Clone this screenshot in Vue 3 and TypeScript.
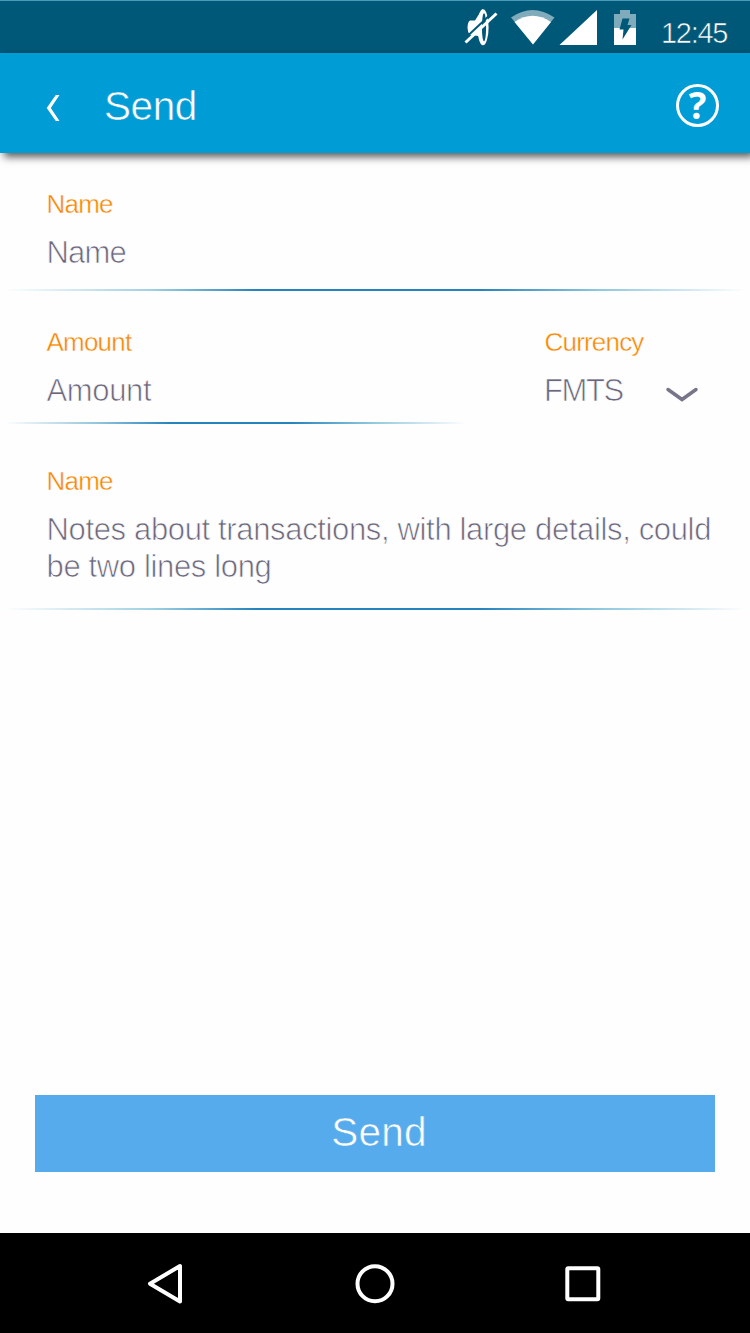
<script setup lang="ts">
import { ref } from 'vue'

const title = ref('Send')
const time = ref('12:45')
const currency = ref('FMTS')
const notes = ref('Notes about transactions, with large details, could be two lines long')
</script>

<template>
  <div class="screen">
    <div class="status">
      <svg class="status-icons" width="180" height="52" viewBox="457 0 180 52">
        <path d="M470 20.500 H475 L481 11 L483 9 V45 Q480.500 43 478.500 36 L470 35 Q467.500 32 467.500 28 Q467.500 22 470 20.500Z" fill="#fff" />
        <ellipse cx="483" cy="27.300" rx="5.600" ry="18" fill="#fff" />
        <ellipse cx="484" cy="27.300" rx="2.100" ry="14" fill="#005878" />
        <path d="M463.500 39.700 L494.500 10.700" stroke="#005878" stroke-width="2" />
        <path d="M465.500 42.500 L496.500 13.500" stroke="#fff" stroke-width="3" />
        <path d="M511 17.500 Q532.500 2.500 554.500 17.500 L533 44Z" fill="#80abbb" />
        <path d="M514.500 22 Q532.500 9.500 551 22 L533 44.500Z" fill="#fff" />
        <path d="M597 10 V45 H559.500Z" fill="#fff" />
        <path d="M620 10 H630 V14 H636 V28 H614 V14 H620Z" fill="#80abbb" />
        <path d="M614 28 H636 V45 H614Z" fill="#fff" />
        <path d="M622.500 18.500 H629.500 L627.500 25 H631.500 L622.500 39.500 L623.500 29.500 H619.500Z" fill="#005878" />
      </svg>
      <span class="time">{{ time }}</span>
    </div>

    <header class="header">
      <svg class="back" width="16" height="28" viewBox="0 0 16 28">
        <path d="M10.800 1 H14.500 L5.800 14 L14.500 27 H10.800 L1.700 14Z" fill="#fff" />
      </svg>
      <h1 class="title">{{ title }}</h1>
      <span class="help">?</span>
    </header>

    <main class="form">
      <section class="field name-field">
        <label class="label">Name</label>
        <div class="value tight">Name</div>
        <div class="rule"></div>
      </section>

      <section class="row">
        <div class="field amount-field">
          <label class="label">Amount</label>
          <div class="value">Amount</div>
          <div class="rule short"></div>
        </div>
        <div class="currency-field">
          <label class="label">Currency</label>
          <div class="select">
            <span class="value code">{{ currency }}</span>
            <svg class="chevron" width="34" height="18" viewBox="0 0 34 18">
              <path d="M3 3.500 L17 13.500 L31 3.500" fill="none" stroke="#78758a" stroke-width="3.500" stroke-linecap="round" />
            </svg>
          </div>
        </div>
      </section>

      <section class="field notes-field">
        <label class="label">Name</label>
        <div class="value">{{ notes }}</div>
        <div class="rule"></div>
      </section>
    </main>

    <button class="send" type="button">Send</button>

    <nav class="nav">
      <svg width="40" height="44" viewBox="0 0 40 44">
        <path d="M34 4 V39.500 L4 21.700Z" fill="none" stroke="#fff" stroke-width="4" stroke-linejoin="round" />
      </svg>
      <svg width="40" height="44" viewBox="0 0 40 44">
        <circle cx="20" cy="21.700" r="17.500" fill="none" stroke="#fff" stroke-width="4" />
      </svg>
      <svg width="40" height="44" viewBox="0 0 40 44">
        <rect x="4.300" y="6.200" width="31" height="31" rx="1" fill="none" stroke="#fff" stroke-width="4" />
      </svg>
    </nav>
  </div>
</template>

<style>
body {
  margin: 0;
  background: #fff;
}
</style>

<style scoped>
.screen {
  width: 750px;
  height: 1333px;
  display: flex;
  flex-direction: column;
  overflow: hidden;
  background: #fefefe;
  font-family: "Liberation Sans", Arial, sans-serif;
}

.status {
  box-sizing: border-box;
  height: 53px;
  flex: none;
  display: flex;
  background: #005878;
  box-shadow: inset 0 1px #4a9ab8;
  padding-left: 457px;
}

.time {
  margin: 17px 0 0 24px;
  font-size: 29px;
  line-height: 33px;
  letter-spacing: -1.3px;
  color: #fff;
  -webkit-text-stroke: 0.6px #005878;
}

.header {
  box-sizing: border-box;
  height: 100px;
  flex: none;
  display: flex;
  align-items: center;
  padding: 0 31px 0 45px;
  background: #009cd6;
  box-shadow: 4px 4px 8px rgba(0, 0, 0, 0.65);
}

.back {
  margin-top: 9px;
}

.title {
  margin: 5px 0 0 43px;
  font-size: 40.500px;
  line-height: 46px;
  font-weight: 400;
  letter-spacing: -0.4px;
  color: #fff;
  -webkit-text-stroke: 0.6px #009cd6;
}

.help {
  box-sizing: border-box;
  width: 43px;
  height: 43px;
  margin: 5px 0 0 auto;
  border: 3px solid #fff;
  border-radius: 50%;
  color: #fff;
  font: 700 37px/35px "Open Sans", sans-serif;
  text-align: center;
}

.form {
  height: 941px;
  flex: none;
}

.field {
  display: flex;
  flex-direction: column;
}

.name-field {
  padding-top: 36px;
}

.label {
  display: block;
  margin-left: 46.500px;
  font-size: 26px;
  line-height: 30px;
  letter-spacing: -0.8px;
  color: #f98600;
  -webkit-text-stroke: 0.4px #fefefe;
}

.value {
  margin: 15px 30px 0 46.500px;
  font-size: 31px;
  line-height: 37px;
  letter-spacing: -0.35px;
  color: #6b687d;
  -webkit-text-stroke: 0.7px #fefefe;
}

.value.tight {
  letter-spacing: -0.8px;
}

.rule {
  height: 2px;
  margin: 18px 4px 0;
  background: linear-gradient(90deg, rgba(33, 160, 200, 0), #9fd0e2 20%, #2583bd 34%, #2583bd 64%, #8dc7de 80%, rgba(33, 160, 200, 0));
}

.row {
  display: flex;
  padding-top: 36px;
}

.amount-field {
  width: 499px;
}

.rule.short {
  height: 2px;
  margin: 13px 33px 1px 5px;
  background: linear-gradient(90deg, rgba(33, 160, 200, 0), #93c5dd 20%, #2583bd 36%, #2583bd 62%, #93c9de 80%, rgba(33, 160, 200, 0));
}

.currency-field {
  flex: 1;
}

.currency-field .label {
  margin-left: 45.500px;
}

.select {
  display: flex;
  margin-top: 15px;
}

.value.code {
  width: 80px;
  margin: 0 0 0 45px;
  letter-spacing: -1.4px;
}

.chevron {
  margin: 14px 0 0 41px;
}

.notes-field {
  padding-top: 41px;
}

.notes-field .rule {
  margin-top: 23px;
}

.send {
  width: 680px;
  height: 77px;
  flex: none;
  margin: 1px 0 0 35px;
  padding: 0 0 2px 8px;
  border: 0;
  background: #55abec;
  color: #fff;
  font: 400 40.500px/75px "Liberation Sans", Arial, sans-serif;
  letter-spacing: 0.2px;
  -webkit-text-stroke: 0.6px #55abec;
}

.nav {
  box-sizing: border-box;
  height: 100px;
  flex: none;
  display: flex;
  justify-content: space-between;
  margin-top: auto;
  padding: 29px 147px 0 146px;
  background: #000;
}
</style>
